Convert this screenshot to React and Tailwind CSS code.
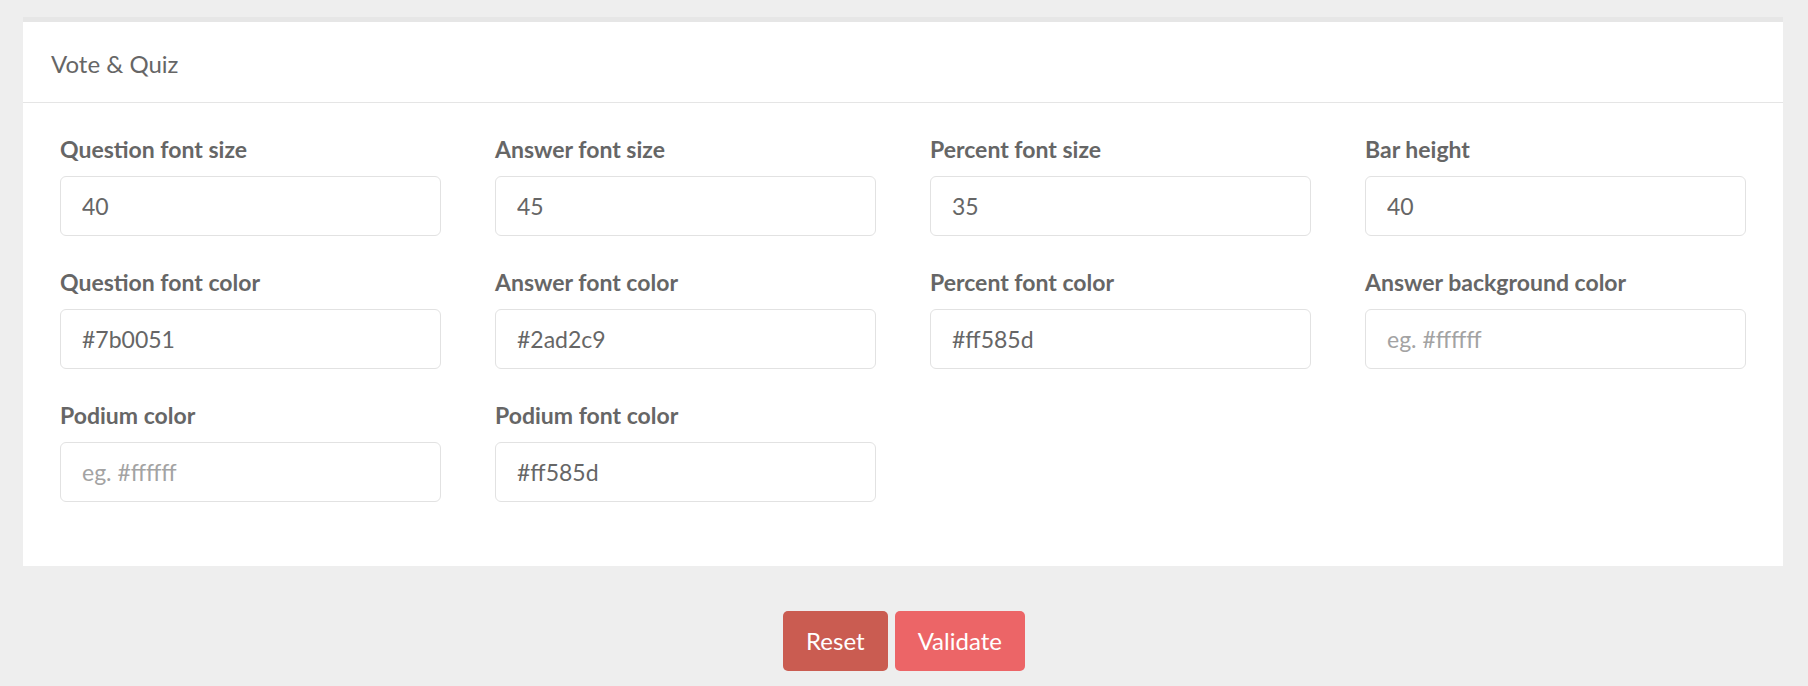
const champs = [
  { label: "Question font size", valeur: "40" },
  { label: "Answer font size", valeur: "45" },
  { label: "Percent font size", valeur: "35" },
  { label: "Bar height", valeur: "40" },
  { label: "Question font color", valeur: "#7b0051" },
  { label: "Answer font color", valeur: "#2ad2c9" },
  { label: "Percent font color", valeur: "#ff585d" },
  { label: "Answer background color", valeur: "" },
  { label: "Podium color", valeur: "" },
  { label: "Podium font color", valeur: "#ff585d" },
];

function Champ({ label, valeur }) {
  return (
    <div className="flex flex-col">
      <label className="h-[26px] leading-[26px] mb-[14px] text-[23px] font-bold text-[#666666]">{label}</label>
      <input
        type="text"
        defaultValue={valeur}
        placeholder="eg. #ffffff"
        className="h-[60px] w-full rounded-[6px] border border-[#e2e2e2] bg-white px-[21px] text-[23px] text-[#666666] placeholder:text-[#a3a3a3] focus:outline-none"
      />
    </div>
  );
}

export default function App() {
  return (
    <div className="min-h-[686px] bg-[#eeeeee] pt-[17px] font-['Lato',sans-serif]">
      <div className="ml-[23px] mr-[25px] border-t-[5px] border-[#e6e6e6] bg-white">
        {/* En-tête */}
        <div className="flex h-[81px] items-center border-b border-[#e5e5e5] pl-[28px] pt-[3px]">
          <h1 className="text-[24px] text-[#666666]">Vote &amp; Quiz</h1>
        </div>

        {/* Champs */}
        <div className="grid grid-cols-4 gap-x-[54px] gap-y-[33px] px-[37px] pt-[33px] pb-[64px]">
          {champs.map((c) => (
            <Champ key={c.label} label={c.label} valeur={c.valeur} />
          ))}
        </div>
      </div>

      <div className="flex justify-center gap-[7px] pt-[45px]">
        <button className="h-[60px] rounded-[5px] bg-[#ca5c51] px-[23px] text-[24px] text-white">Reset</button>
        <button className="h-[60px] rounded-[5px] bg-[#ec6567] px-[23px] text-[24px] text-white">Validate</button>
      </div>
    </div>
  );
}
